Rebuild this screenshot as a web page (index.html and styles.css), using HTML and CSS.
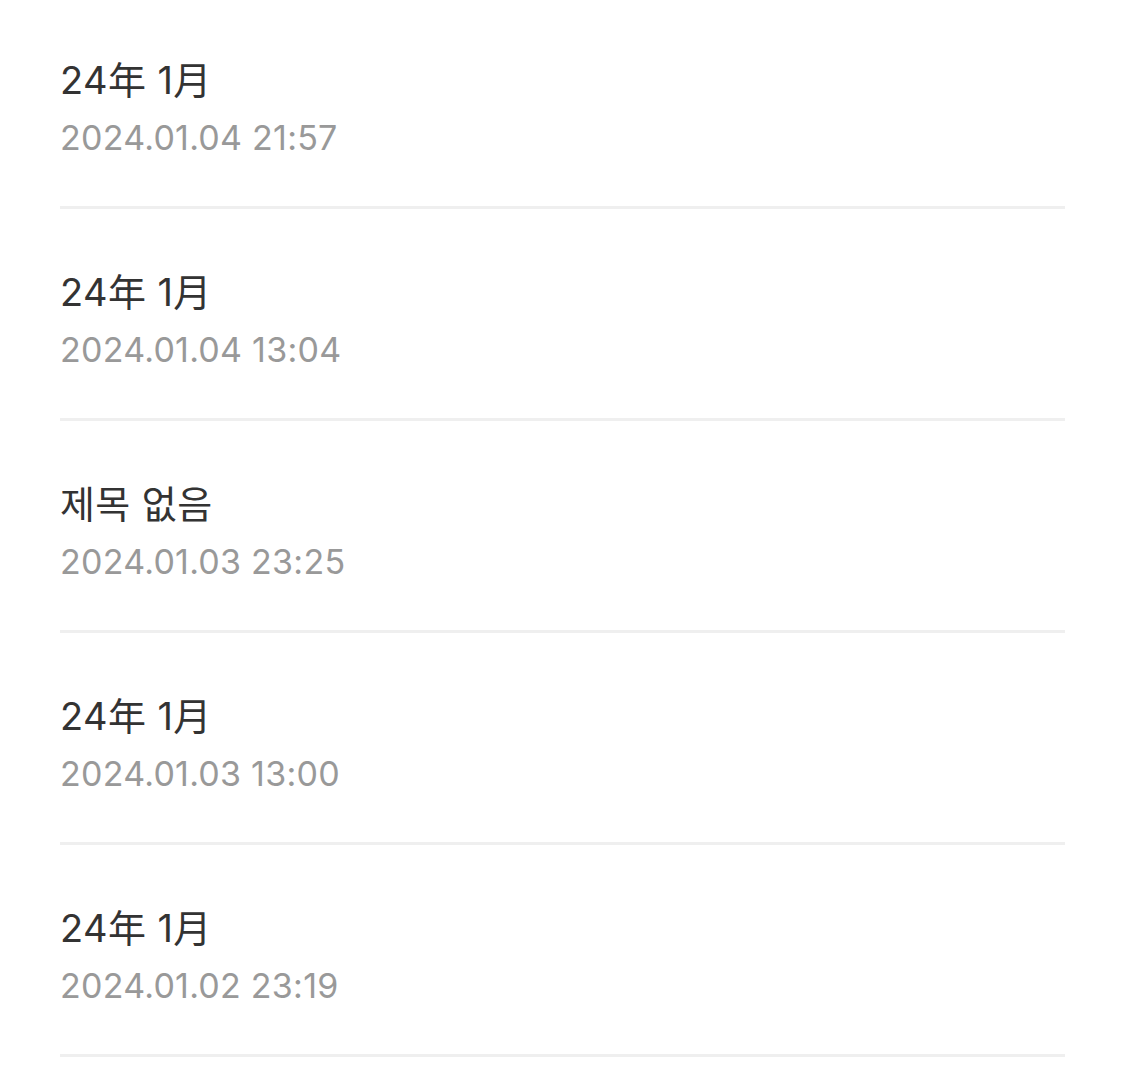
FILE: index.html
```html
<!DOCTYPE html>
<html lang="ko">
<head>
	<meta charset="UTF-8">
	<title>노트 목록</title>
	<link rel="stylesheet" href="styles.css">
</head>
<body>
	<ul class="note-list">
		<li class="note">
			<div class="note-title">24年 1月</div>
			<div class="note-date">2024.01.04 21:57</div>
		</li>
		<li class="note">
			<div class="note-title">24年 1月</div>
			<div class="note-date">2024.01.04 13:04</div>
		</li>
		<li class="note">
			<div class="note-title">제목 없음</div>
			<div class="note-date">2024.01.03 23:25</div>
		</li>
		<li class="note">
			<div class="note-title">24年 1月</div>
			<div class="note-date">2024.01.03 13:00</div>
		</li>
		<li class="note">
			<div class="note-title">24年 1月</div>
			<div class="note-date">2024.01.02 23:19</div>
		</li>
	</ul>
</body>
</html>
```
FILE: styles.css
```css
body {
	margin: 0;
	padding: 0;
	background-color: #fff;
	font-family: Inter, "Noto Sans CJK KR", "Noto Sans CJK JP", sans-serif;
}
.note-list {
	list-style: none;
	margin: 0;
	padding: 0 60px;
}
.note {
	padding: 55px 0 40px;
	border-bottom: 3px solid #efefef;
}
.note:first-child {
	padding-top: 52px;
}
.note-title {
	font-size: 38px;
	line-height: 57px;
	letter-spacing: 0.4px;
	color: #333;
}
.note-date {
	font-size: 34px;
	line-height: 57px;
	letter-spacing: 0.25px;
	color: #999;
}
```
